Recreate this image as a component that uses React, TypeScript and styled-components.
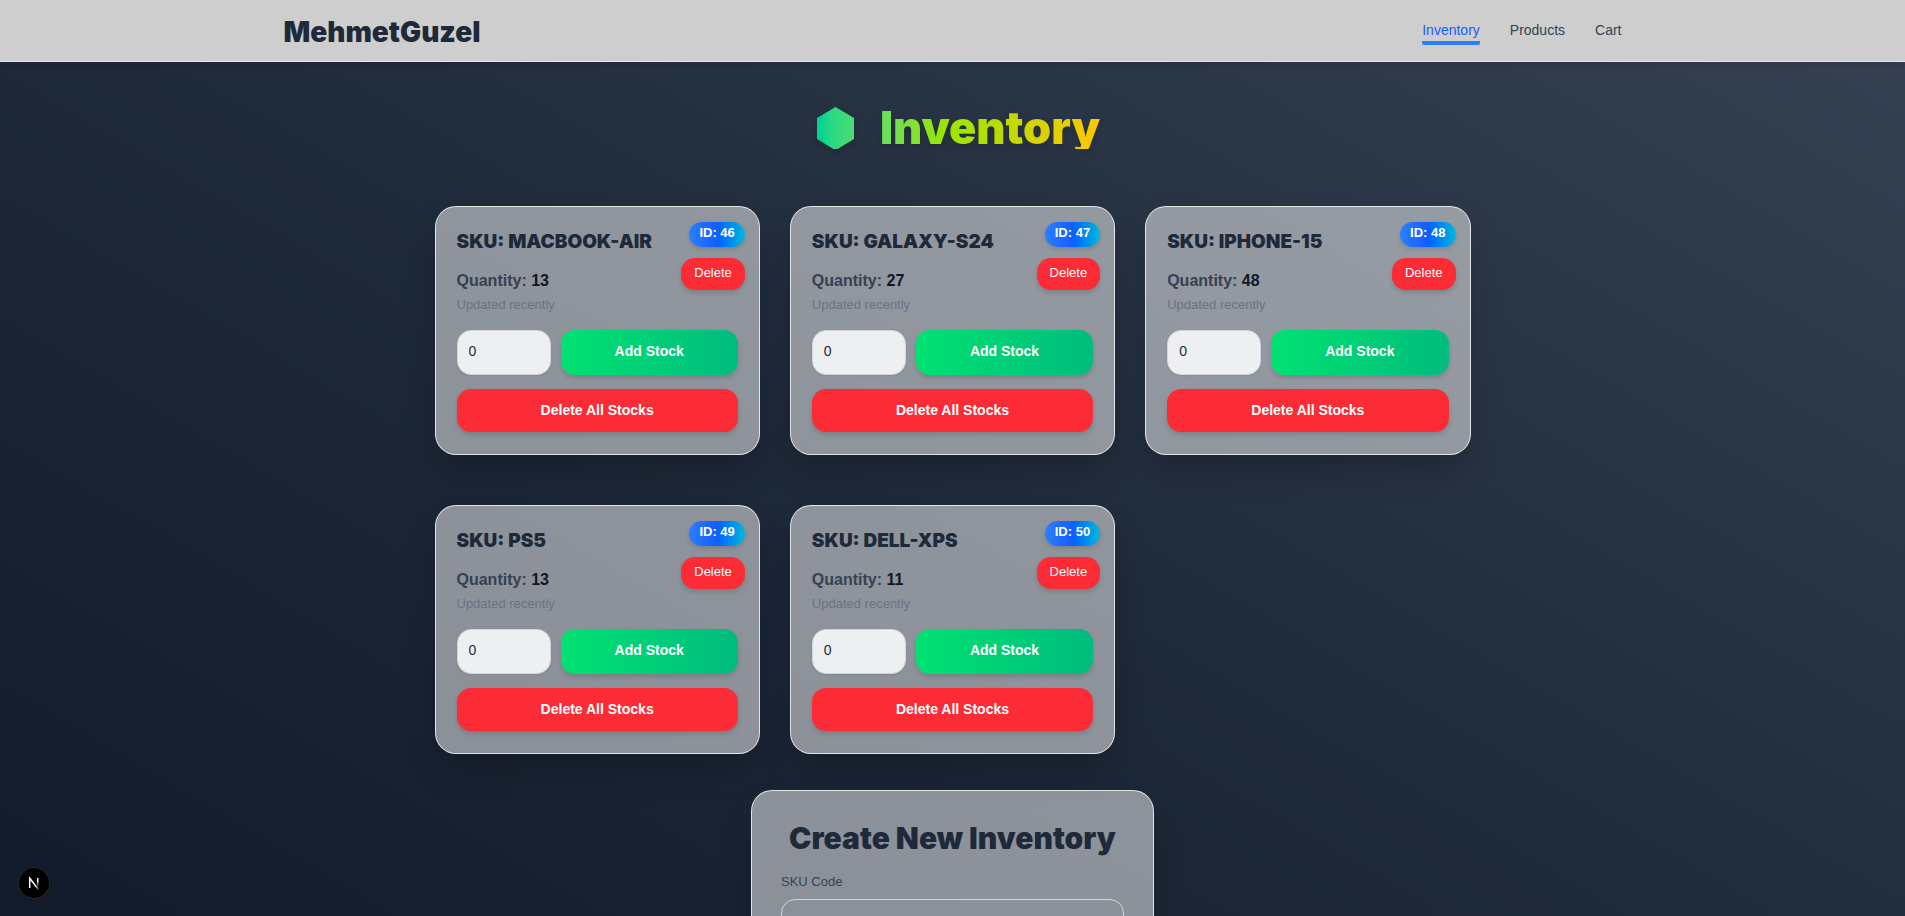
import React from 'react';
import styled, { createGlobalStyle } from 'styled-components';

const GlobalStyle = createGlobalStyle`
  *, *::before, *::after { box-sizing: border-box; }
  body { margin: 0; background: #101828; }
  body, button, input {
    font-family: "Liberation Sans", Arial, sans-serif;
    font-size: 14px;
    line-height: 20px;
  }
  h1, h2, h3, p { margin: 0; }
  button { border: 0; cursor: pointer; }
`;

const heavy = 'Inter, "Arial Black", sans-serif';

const Page = styled.div`
  min-height: 100vh;
  background: linear-gradient(to top right, #101828, #1e2939 50%, #364153);
`;

const Header = styled.header`
  background: #cecece;
  border-bottom: 1px solid #e5e7eb;
  box-shadow: 0 4px 6px -1px rgba(0, 0, 0, 0.1);
`;

const HeaderInner = styled.div`
  display: flex;
  align-items: center;
  justify-content: space-between;
  max-width: 1344px;
  height: 61px;
  margin: 0 auto;
  padding: 0 3px;
`;

const Logo = styled.a`
  padding-top: 2px;
  font-family: ${heavy};
  font-size: 28px;
  line-height: 32px;
  font-weight: 900;
  color: #1e2939;
  text-decoration: none;
`;

const Nav = styled.nav`
  display: flex;
  gap: 30px;
`;

const NavLink = styled.a<{ $active?: boolean }>`
  padding-top: 4px;
  padding-bottom: 1px;
  border-bottom: 4px solid ${(p) => (p.$active ? '#2b7fff' : 'transparent')};
  border-radius: 2px;
  color: ${(p) => (p.$active ? '#155dfc' : '#364153')};
  text-decoration: none;
`;

const Main = styled.main`
  display: flex;
  flex-direction: column;
  align-items: center;
  padding: 45px 20px 140px;
`;

const Title = styled.h1`
  display: flex;
  align-items: center;
  gap: 26px;
  margin-bottom: 57px;
  padding-left: 12px;
  filter: drop-shadow(0 3px 3px rgba(0, 0, 0, 0.12));
`;

const TitleText = styled.span`
  font-family: ${heavy};
  font-size: 45px;
  line-height: 42px;
  font-weight: 900;
  color: transparent;
  background: linear-gradient(to right, #69de61, #9ae600 30%, #fdc700);
  -webkit-background-clip: text;
  background-clip: text;
`;

const Grid = styled.section`
  display: grid;
  grid-template-columns: repeat(3, 1fr);
  gap: 50px 30px;
  width: 100%;
  max-width: 1036px;
  margin-bottom: 36px;
`;

const Panel = styled.div`
  position: relative;
  background: rgba(255, 255, 255, 0.5);
  border: 1px solid rgba(255, 255, 255, 0.75);
  border-radius: 21px;
  box-shadow: 0 18px 36px -8px rgba(0, 0, 0, 0.26);
`;

const Card = styled(Panel)`
  padding: 22px 21px;
`;

const Sku = styled.h2`
  font-family: ${heavy};
  font-size: 19px;
  line-height: 25px;
  font-weight: 900;
  white-space: nowrap;
  color: #1e2939;
  margin-bottom: 16px;
`;

const Quantity = styled.p`
  font-size: 16px;
  line-height: 22px;
  font-weight: 700;
  color: #364153;
  margin-bottom: 4px;
`;

const Count = styled.span`
  color: #101828;
`;

const Updated = styled.p`
  font-size: 13px;
  line-height: 18px;
  color: #6a7282;
  margin-bottom: 16px;
`;

const Corner = styled.div`
  position: absolute;
  top: 15px;
  right: 14px;
  display: flex;
  flex-direction: column;
  align-items: flex-end;
  gap: 11px;
`;

const Badge = styled.span`
  padding: 2px 10px 5px;
  border-radius: 13px;
  font-size: 13px;
  line-height: 18px;
  font-weight: 700;
  color: #fff;
  background: linear-gradient(to right, #2b7fff, #155dfc 50%, #0069ff 55%, #00b8db);
  box-shadow: 0 2px 4px rgba(0, 0, 0, 0.15);
`;

const Button = styled.button<{ $green?: boolean }>`
  flex: 1;
  width: 100%;
  padding: ${(p) => (p.$green ? '10px 14px 13px' : '11px 14px 12px')};
  border-radius: 14px;
  font-weight: 700;
  color: #fff;
  background: ${(p) => (p.$green ? 'linear-gradient(to right, #00e272, #00bc7d)' : '#fb2c36')};
  box-shadow: 0 3px 5px rgba(0, 0, 0, 0.14);
`;

const DeleteButton = styled.button`
  padding: 6px 13px 8px;
  border-radius: 14px;
  font-size: 13px;
  line-height: 18px;
  color: #fff;
  background: #fb2c36;
  box-shadow: 0 3px 5px rgba(0, 0, 0, 0.14);
`;

const StockRow = styled.div`
  display: flex;
  gap: 10px;
  height: 45px;
  margin-bottom: 14px;
`;

const StockInput = styled.input`
  width: 94px;
  padding: 0 11px 3px;
  border: 1px solid #d1d5dc;
  border-radius: 14px;
  color: #1e2939;
  background: #eeeff1;
  box-shadow: 0 1px 2px rgba(0, 0, 0, 0.08);
  appearance: textfield;
  &::-webkit-inner-spin-button { appearance: none; }
`;

const Form = styled(Panel).attrs({ as: 'form' })`
  width: 100%;
  max-width: 403px;
  padding: 29px 29px 28px;
`;

const FormTitle = styled.h2`
  font-family: ${heavy};
  font-size: 30px;
  line-height: 36px;
  font-weight: 900;
  text-align: center;
  white-space: nowrap;
  color: #1e2939;
  margin-bottom: 17px;
`;

const Label = styled.label`
  display: block;
  margin-bottom: 8px;
  font-size: 13px;
  line-height: 18px;
  color: #364153;
`;

const FormInput = styled.input`
  display: block;
  width: 100%;
  height: 45px;
  padding: 0 14px;
  border: 1px solid #d1d5dc;
  border-radius: 14px;
  background: transparent;
`;

const DevBadge = styled.button`
  position: fixed;
  left: 18px;
  bottom: 17px;
  display: flex;
  align-items: center;
  justify-content: center;
  width: 32px;
  height: 32px;
  padding: 0;
  border-radius: 50%;
  background: #000;
  box-shadow: inset 0 0 0 1px #2a2a2a;
`;

const items = [
  { id: 46, sku: 'MACBOOK-AIR', quantity: 13 },
  { id: 47, sku: 'GALAXY-S24', quantity: 27 },
  { id: 48, sku: 'IPHONE-15', quantity: 48 },
  { id: 49, sku: 'PS5', quantity: 13 },
  { id: 50, sku: 'DELL-XPS', quantity: 11 },
];

function Hexagon() {
  return (
    <svg width="37" height="42" viewBox="0 0 37 42" aria-hidden="true">
      <defs>
        <linearGradient id="hex" x1="0" x2="1">
          <stop offset="0.1" stopColor="#00d492" />
          <stop offset="0.4" stopColor="#2bd983" />
          <stop offset="1" stopColor="#4adc74" />
        </linearGradient>
      </defs>
      <path d="M18.5 0 37 11v21L20.500 42h-4L0 32V11z" fill="url(#hex)" />
    </svg>
  );
}

function NextMark() {
  return (
    <svg width="14" height="14" viewBox="0 0 14 14" fill="none" aria-hidden="true">
      <defs>
        <linearGradient id="stem" x1="0" y1="0" x2="0" y2="1">
          <stop offset="0.3" stopColor="#fff" />
          <stop offset="1" stopColor="#fff" stopOpacity="0" />
        </linearGradient>
        <linearGradient id="slash" x1="0" y1="0" x2="1" y2="1">
          <stop offset="0.7" stopColor="#fff" />
          <stop offset="1" stopColor="#fff" stopOpacity="0.2" />
        </linearGradient>
      </defs>
      <path d="M2.700 12V2.200L11.500 13.500" stroke="url(#slash)" strokeWidth="1.500" />
      <rect x="10" y="2" width="1.500" height="9" fill="url(#stem)" />
    </svg>
  );
}

export default function App() {
  return (
    <Page>
      <GlobalStyle />
      <Header>
        <HeaderInner>
          <Logo href="#">MehmetGuzel</Logo>
          <Nav>
            <NavLink href="#inventory" $active>Inventory</NavLink>
            <NavLink href="#products">Products</NavLink>
            <NavLink href="#cart">Cart</NavLink>
          </Nav>
        </HeaderInner>
      </Header>
      <Main>
        <Title>
          <Hexagon />
          <TitleText>Inventory</TitleText>
        </Title>
        <Grid>
          {items.map((item) => (
            <Card key={item.id}>
              <Sku>SKU: {item.sku}</Sku>
              <Quantity>
                Quantity: <Count>{item.quantity}</Count>
              </Quantity>
              <Updated>Updated recently</Updated>
              <StockRow>
                <StockInput type="number" defaultValue={0} aria-label={`Stock to add for ${item.sku}`} />
                <Button type="button" $green>Add Stock</Button>
              </StockRow>
              <Button type="button">Delete All Stocks</Button>
              <Corner>
                <Badge>ID: {item.id}</Badge>
                <DeleteButton type="button">Delete</DeleteButton>
              </Corner>
            </Card>
          ))}
        </Grid>
        <Form>
          <FormTitle>Create New Inventory</FormTitle>
          <Label htmlFor="sku-code">SKU Code</Label>
          <FormInput id="sku-code" type="text" />
        </Form>
      </Main>
      <DevBadge type="button" aria-label="Open developer tools">
        <NextMark />
      </DevBadge>
    </Page>
  );
}
